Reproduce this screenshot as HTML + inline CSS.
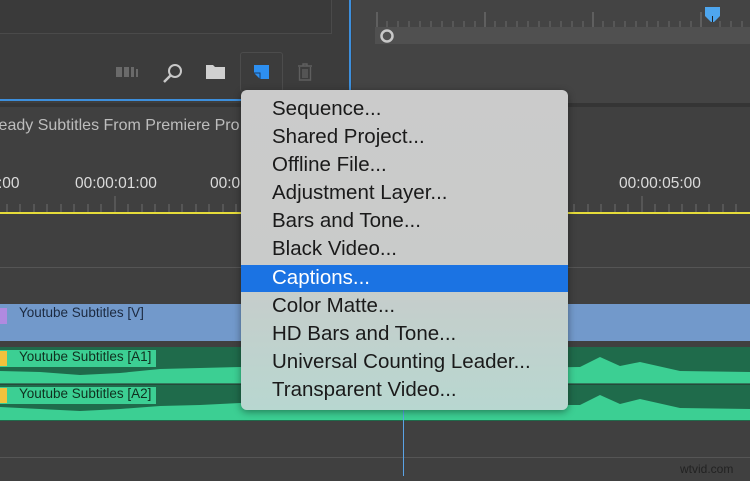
<!DOCTYPE html>
<html><head><style>
*{margin:0;padding:0;box-sizing:border-box}
body{width:750px;height:481px;overflow:hidden;background:#3e3e3e;position:relative;font-family:"Liberation Sans",sans-serif}
.a{position:absolute}
.mi{position:absolute;left:31px;font-size:20.5px;color:#1a1a1a;height:28px;line-height:28px;white-space:nowrap}
</style></head><body>
<div class="a" style="left:0;top:0;width:350px;height:100px;background:#3c3c3c"></div>
<div class="a" style="left:0;top:0;width:332px;height:34px;border-right:1px solid #4a4a4a;border-bottom:1px solid #4a4a4a;background:#3a3a3a"></div>
<div class="a" style="left:349px;top:0;width:2px;height:101px;background:#3d8fdc"></div>
<div class="a" style="left:0;top:99px;width:351px;height:2px;background:#3d8fdc"></div>
<div class="a" style="left:352px;top:0;width:398px;height:103px;background:#444"></div>
<div class="a" style="left:375px;top:27px;width:375px;height:17px;background:#505050"></div>
<svg class="a" style="left:375px;top:8px" width="375" height="20">
<g stroke="#7a7a7a" stroke-width="1">
<line x1="2" y1="4" x2="2" y2="19"/><line x1="110" y1="4" x2="110" y2="19"/><line x1="218" y1="4" x2="218" y2="19"/><line x1="326" y1="4" x2="326" y2="19"/>
</g>
<g stroke="#6a6a6a"><path d="M12 13V19M23 13V19M34 13V19M45 13V19M56 13V19M67 13V19M78 13V19M89 13V19M100 13V19M120 13V19M131 13V19M142 13V19M153 13V19M164 13V19M175 13V19M186 13V19M197 13V19M208 13V19M228 13V19M239 13V19M250 13V19M261 13V19M272 13V19M283 13V19M294 13V19M305 13V19M316 13V19M345 13V19M356 13V19M367 13V19"/></g>
</svg>
<svg class="a" style="left:704px;top:6px" width="18" height="18"><path d="M1 1H16V10L10 16H7L1 10Z" fill="#4ea6ee"/><line x1="8.5" y1="10" x2="8.5" y2="16" stroke="#222"/></svg>
<svg class="a" style="left:379px;top:28px" width="16" height="16"><circle cx="8" cy="8" r="5.5" fill="none" stroke="#c8c8c8" stroke-width="2.5"/></svg>
<svg class="a" style="left:116px;top:65px" width="24" height="14"><rect x="0" y="2" width="6" height="10" fill="#6a6a6a"/><rect x="8" y="2" width="5" height="10" fill="#6a6a6a"/><rect x="15" y="2" width="3" height="10" fill="#6a6a6a"/><rect x="20" y="4" width="2" height="8" fill="#6a6a6a"/></svg>
<svg class="a" style="left:162px;top:62px" width="22" height="22"><circle cx="13" cy="9" r="6" fill="none" stroke="#c8c8c8" stroke-width="2"/><line x1="8.5" y1="13.5" x2="2" y2="20" stroke="#c8c8c8" stroke-width="2.5"/></svg>
<svg class="a" style="left:205px;top:64px" width="22" height="16"><path d="M1 1H8L10 3H20V15H1Z" fill="#d0d0d0"/></svg>
<div class="a" style="left:240px;top:52px;width:43px;height:40px;border:1px solid #4c4c4c;border-radius:3px"></div>
<svg class="a" style="left:253px;top:64px" width="17" height="16"><path d="M1 1H16V15H7L1 9Z" fill="#2d8ff0"/><path d="M1 9H7V15" fill="none" stroke="#1a3c66" stroke-width="1"/></svg>
<svg class="a" style="left:296px;top:62px" width="18" height="20"><path d="M2 4H16M7 4V2H11V4M3.5 5V18H14.5V5M7 7V16M9 7V16M11 7V16" fill="none" stroke="#5e5e5e" stroke-width="1.4"/></svg>
<div class="a" style="left:0;top:103px;width:750px;height:4px;background:#353535"></div>
<div class="a" style="left:0;top:107px;width:750px;height:160px;background:#404040"></div>
<div class="a" style="left:-13px;top:117px;font-size:16px;color:#bdbdbd;white-space:nowrap">Ready Subtitles From Premiere Pro</div>
<div class="a" style="left:-2px;top:175px;font-size:15.5px;color:#dcdcdc">:00</div>
<div class="a" style="left:75px;top:175px;font-size:15.5px;color:#dcdcdc">00:00:01:00</div>
<div class="a" style="left:210px;top:175px;font-size:15.5px;color:#dcdcdc">00:0</div>
<div class="a" style="left:619px;top:175px;font-size:15.5px;color:#dcdcdc">00:00:05:00</div>
<svg class="a" style="left:0;top:194px" width="750" height="20"><g stroke="#6c6c6c"><path d="M7 10V18M20 10V18M34 10V18M47 10V18M61 10V18M74 10V18M88 10V18M101 10V18M128 10V18M142 10V18M155 10V18M169 10V18M182 10V18M196 10V18M209 10V18M223 10V18M236 10V18M574 10V18M588 10V18M601 10V18M615 10V18M628 10V18M655 10V18M669 10V18M682 10V18M696 10V18M709 10V18M723 10V18M736 10V18"/><path d="M115 2V18M642 2V18"/></g></svg>
<div class="a" style="left:0;top:212px;width:750px;height:2px;background:#e6dc3a"></div>
<div class="a" style="left:0;top:267px;width:750px;height:1px;background:#555"></div>
<div class="a" style="left:0;top:268px;width:750px;height:213px;background:#404040"></div>
<div class="a" style="left:0;top:304px;width:750px;height:37px;background:#7299cb"></div>
<div class="a" style="left:0;top:308px;width:7px;height:16px;background:#b08ae0"></div>
<div class="a" style="left:19px;top:305px;font-size:13.5px;color:#1c2a40">Youtube Subtitles [V]</div>
<div class="a" style="left:0;top:347px;width:750px;height:74px;background:#1f6b4b"></div>
<svg class="a" style="left:0;top:347px" width="750" height="74">
<path d="M0 24 L40 25 L80 28 L120 26 L160 22 L200 21 L240 20 L300 22 L340 17 L420 22 L580 20 L600 10 L620 19 L640 15 L680 24 L750 25 V37 H0Z" fill="#3ccf93"/>
<path d="M0 60 L40 62 L80 64 L120 62 L160 59 L200 58 L240 56 L300 59 L340 55 L420 58 L580 58 L600 48 L620 57 L640 52 L680 61 L750 62 V73 H0Z" fill="#3ccf93"/>
<line x1="0" y1="37" x2="750" y2="37" stroke="#2a2a2a" stroke-width="1"/>
</svg>
<div class="a" style="left:0;top:350px;width:156px;height:17px;background:#3ccf93"></div>
<div class="a" style="left:0;top:387px;width:156px;height:17px;background:#3ccf93"></div>
<div class="a" style="left:0;top:351px;width:7px;height:15px;background:#f1c23c"></div>
<div class="a" style="left:0;top:388px;width:7px;height:15px;background:#f1c23c"></div>
<div class="a" style="left:19px;top:349px;font-size:13.5px;color:#10301f">Youtube Subtitles [A1]</div>
<div class="a" style="left:19px;top:386px;font-size:13.5px;color:#10301f">Youtube Subtitles [A2]</div>
<div class="a" style="left:0;top:457px;width:750px;height:1px;background:#555"></div>
<div class="a" style="left:403px;top:410px;width:1px;height:66px;background:#5aa3e6"></div>
<div class="a" style="left:680px;top:462px;font-size:12px;color:#222">wtvid.com</div>
<div class="a" style="left:241px;top:90px;width:327px;height:320px;border-radius:6px;background:linear-gradient(#cbcbcb 0%,#c9cbca 55%,#b8d7d0 100%);box-shadow:0 2px 8px rgba(0,0,0,.4)">
<div class="a" style="left:0;top:175px;width:327px;height:27px;background:#1b73e3"></div>
<div class="mi" style="top:5px">Sequence...</div>
<div class="mi" style="top:33px">Shared Project...</div>
<div class="mi" style="top:61px">Offline File...</div>
<div class="mi" style="top:89px">Adjustment Layer...</div>
<div class="mi" style="top:117px">Bars and Tone...</div>
<div class="mi" style="top:145px">Black Video...</div>
<div class="mi" style="top:174px;color:#fff">Captions...</div>
<div class="mi" style="top:202px">Color Matte...</div>
<div class="mi" style="top:230px">HD Bars and Tone...</div>
<div class="mi" style="top:258px">Universal Counting Leader...</div>
<div class="mi" style="top:286px">Transparent Video...</div>
</div>
</body></html>
